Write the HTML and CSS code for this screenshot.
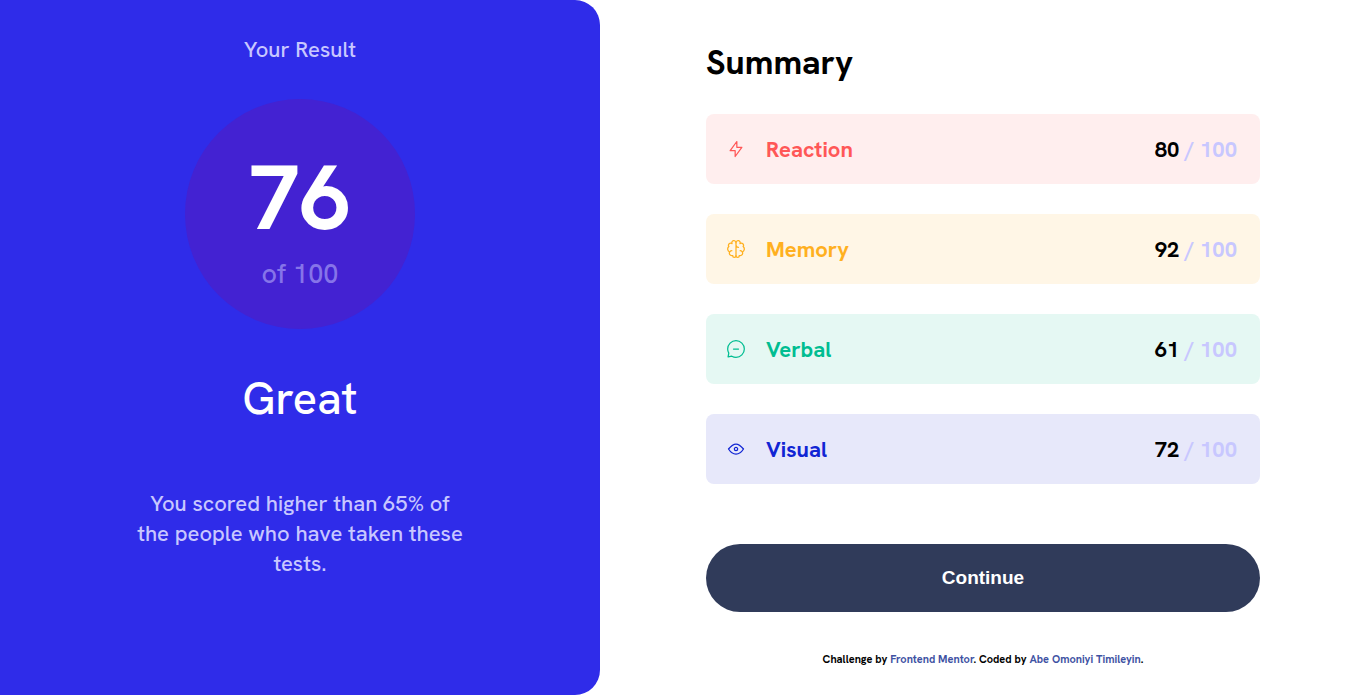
FILE: index.html
```
<!DOCTYPE html>
<html lang="en">
<head>
<meta charset="utf-8">
<meta name="viewport" content="width=device-width, initial-scale=1">
<title>Results summary</title>
<link rel="stylesheet" href="styles.css">
</head>
<body>
<main class="page">
  <section class="result">
    <h2 class="result-title">Your Result</h2>
    <div class="score">
      <span class="score-value">76</span>
      <span class="score-total">of 100</span>
    </div>
    <p class="grade">Great</p>
    <p class="result-text">You scored higher than 65% of the people who have taken these tests.</p>
  </section>
  <section class="summary">
    <h1 class="summary-title">Summary</h1>
    <ul class="list">
      <li class="item reaction">
        <svg class="icon" viewBox="0 0 20 20" aria-hidden="true"><path d="M10.833 8.333V2.5l-6.666 9.167h5V17.5l6.666-9.167h-5Z"/></svg>
        <span class="label">Reaction</span>
        <span class="points">80 <span class="max">/ 100</span></span>
      </li>
      <li class="item memory">
        <svg class="icon" viewBox="0 0 20 20" aria-hidden="true"><path d="M5.833 11.667a2.5 2.5 0 1 0 .834 4.858"/><path d="M3.553 13.004a3.333 3.333 0 0 1-.728-5.53m.025-.067a2.083 2.083 0 0 1 2.983-2.824m.199.054A2.083 2.083 0 1 1 10 3.75v12.917a1.667 1.667 0 0 1-3.333 0M10 5.833a2.5 2.5 0 0 0 2.5 2.5m1.667 3.334a2.5 2.5 0 1 1-.834 4.858"/><path d="M16.447 13.004a3.334 3.334 0 0 0 .728-5.53m-.025-.067a2.083 2.083 0 0 0-2.983-2.824M10 3.75a2.085 2.085 0 0 1 2.538-2.033 2.084 2.084 0 0 1 1.43 2.92m-.635 12.03a1.667 1.667 0 0 1-3.333 0"/></svg>
        <span class="label">Memory</span>
        <span class="points">92 <span class="max">/ 100</span></span>
      </li>
      <li class="item verbal">
        <svg class="icon" viewBox="0 0 20 20" aria-hidden="true"><path d="M7.5 10h5M10 18.333A8.333 8.333 0 1 0 1.667 10c0 1.518.406 2.942 1.115 4.167l-.699 3.75 3.75-.699A8.295 8.295 0 0 0 10 18.333Z"/></svg>
        <span class="label">Verbal</span>
        <span class="points">61 <span class="max">/ 100</span></span>
      </li>
      <li class="item visual">
        <svg class="icon" viewBox="0 0 20 20" aria-hidden="true"><path d="M10 11.667a1.667 1.667 0 1 0 0-3.334 1.667 1.667 0 0 0 0 3.334Z"/><path d="M17.5 10c-1.574 2.492-4.402 5-7.5 5s-5.926-2.508-7.5-5C4.416 7.632 6.66 5 10 5s5.584 2.632 7.5 5Z"/></svg>
        <span class="label">Visual</span>
        <span class="points">72 <span class="max">/ 100</span></span>
      </li>
    </ul>
    <button class="continue" type="button">Continue</button>
    <p class="attribution">Challenge by <a href="#">Frontend Mentor</a>. Coded by <a href="#">Abe Omoniyi Timileyin</a>.</p>
  </section>
</main>
</body>
</html>
```
FILE: styles.css
```
* {
  box-sizing: border-box;
  margin: 0;
  padding: 0;
}

body {
  font-family: "Hanken Grotesk", Inter, "Liberation Sans", sans-serif;
  background: #fff;
  color: #000;
}

.page {
  display: grid;
  grid-template-columns: 600fr 766fr;
  min-height: 100vh;
}

.result {
  display: flex;
  flex-direction: column;
  align-items: center;
  padding: 35px 32px;
  background: #2f2ce9;
  border-radius: 0 25px 25px 0;
  text-align: center;
  color: #c8c7ff;
}

.result-title {
  font-size: 22px;
  line-height: 30px;
  font-weight: 500;
}

.score {
  display: flex;
  flex-direction: column;
  align-items: center;
  width: 230px;
  height: 230px;
  margin-top: 34px;
  padding-top: 52px;
  border-radius: 50%;
  background: #4322d2;
}

.score-value {
  font-size: 91px;
  line-height: 94px;
  font-weight: 700;
  color: #fff;
}

.score-total {
  margin-top: 12px;
  font-size: 27px;
  line-height: 34px;
  font-weight: 500;
  color: #8674e9;
}

.grade {
  margin-top: 40px;
  font-size: 45px;
  line-height: 60px;
  font-weight: 500;
  color: #fff;
}

.result-text {
  max-width: 336px;
  margin-top: 60px;
  font-size: 22px;
  line-height: 30px;
  font-weight: 500;
}

.summary {
  display: flex;
  flex-direction: column;
  padding: 42px 106px 24px;
}

.summary-title {
  font-size: 34px;
  line-height: 40px;
  font-weight: 700;
}

.list {
  display: grid;
  gap: 30px;
  margin-top: 32px;
  list-style: none;
}

.item {
  display: flex;
  align-items: center;
  height: 70px;
  padding: 0 23px 0 20px;
  border-radius: 8px;
  font-size: 22px;
  line-height: 30px;
  font-weight: 700;
}

.icon {
  width: 20px;
  height: 20px;
  margin-right: 20px;
  fill: none;
  stroke: currentColor;
  stroke-width: 1.25;
  stroke-linecap: round;
  stroke-linejoin: round;
}

.label,
.points {
  padding-top: 2px;
}

.points {
  margin-left: auto;
  color: #000;
}

.max {
  color: #c8c7ff;
}

.reaction {
  background: #ffeeee;
  color: #ff5757;
}

.memory {
  background: #fff6e6;
  color: #ffb01f;
}

.verbal {
  background: #e5f8f3;
  color: #00bd91;
}

.visual {
  background: #e7e8fa;
  color: #1125d4;
}

.continue {
  height: 68px;
  margin-top: 60px;
  border: 0;
  border-radius: 34px;
  background: #303b5a;
  color: #fff;
  font-family: "Liberation Sans", Arial, sans-serif;
  font-size: 19px;
  font-weight: 700;
  cursor: pointer;
}

.attribution {
  margin-top: 40px;
  font-size: 11px;
  line-height: 14px;
  font-weight: 700;
  text-align: center;
}

.attribution a {
  color: #3e52a3;
  text-decoration: none;
}
```
